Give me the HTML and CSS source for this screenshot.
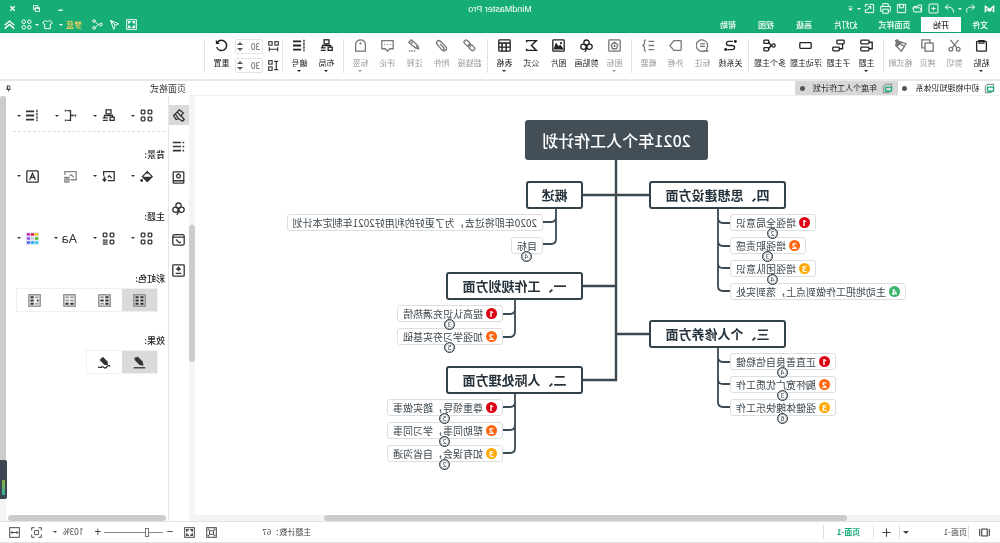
FILE: index.html
```html
<!DOCTYPE html>
<html lang="zh-CN">
<head>
<meta charset="utf-8">
<title>MindMaster Pro</title>
<link rel="stylesheet" href="styles.css">
</head>
<body>
<svg class="sprite" aria-hidden="true">
  <symbol id="logo" viewBox="0 0 16 16"><path d="M1 3l7 5 7-5v11l-4-3-3 2-3-2-4 3z" fill="currentColor" stroke="none"/><path d="M4 7v4M12 7v4" stroke="#17ad77"/></symbol>
  <symbol id="redo" viewBox="0 0 16 16"><path d="M4 14h4a4 4 0 0 0 0-8H2M6 2L2 6l4 4"/></symbol>
  <symbol id="forward" viewBox="0 0 16 16"><path d="M2 14c0-5 3-8 7-8h5M10 2l4 4-4 4"/></symbol>
  <symbol id="back" viewBox="0 0 16 16"><path d="M13 14c2-4 0-8-5-8H2M6 2L2 6l4 4"/></symbol>
  <symbol id="new" viewBox="0 0 16 16"><rect x="1.500" y="1.500" width="13" height="13" rx="1"/><path d="M8 5v6M5 8h6"/></symbol>
  <symbol id="open" viewBox="0 0 16 16"><path d="M2 13V3h5l1 2h5v2M2 13l2-6h11l-2 6z"/></symbol>
  <symbol id="save" viewBox="0 0 16 16"><path d="M2 2h12v12H2zM5 2v5h6V2M9 4v1"/></symbol>
  <symbol id="print" viewBox="0 0 16 16"><path d="M4 5V1h8v4M4 12H1V5h14v7h-3M4 9h8v6H4z"/></symbol>
  <symbol id="export" viewBox="0 0 16 16"><path d="M8 2H2v12h12V9M6 5l7 6M6 9V5h4M10 2h4v4"/></symbol>
  <symbol id="more" viewBox="0 0 16 16"><path d="M3 4h10"/><path d="M3 8h10l-5 5z" fill="currentColor" stroke="none"/></symbol>
  <symbol id="min" viewBox="0 0 16 16"><path d="M3 12h10" stroke-width="3"/></symbol>
  <symbol id="restore" viewBox="0 0 16 16"><path d="M5 5V1h10v9h-4M1 6h10v9H1zM1 8h10" stroke-width="2"/></symbol>
  <symbol id="close" viewBox="0 0 16 16"><path d="M3 3l10 10M13 3L3 13" stroke-width="3"/></symbol>
  <symbol id="full" viewBox="0 0 16 16"><rect x="1" y="1" width="14" height="14"/><path d="M4 7V4h3M9 4h3v3M12 9v3H9M7 12H4V9" stroke-width="2"/></symbol>
  <symbol id="cursor" viewBox="0 0 16 16"><path d="M14 2L2 7l5 2 2 6zM14 2L7 9"/></symbol>
  <symbol id="share" viewBox="0 0 16 16"><circle cx="3" cy="8" r="2"/><circle cx="13" cy="3" r="2"/><circle cx="13" cy="13" r="2"/><path d="M5 8h2l4-4M7 8l4 4"/></symbol>
  <symbol id="shirt" viewBox="0 0 16 16"><path d="M5 2L1 5l2 3 1-1v7h8V7l1 1 2-3-4-3c-1 2-5 2-6 0z"/></symbol>
  <symbol id="apps" viewBox="0 0 16 16"><circle cx="4" cy="4" r="2.600"/><circle cx="12" cy="4" r="2.600"/><circle cx="4" cy="12" r="2.600"/><circle cx="12" cy="12" r="2.600"/></symbol>
  <symbol id="up" viewBox="0 0 16 16"><path d="M1 9l7-6 7 6M1 14l7-6 7 6" stroke-width="2"/></symbol>
  <symbol id="paste" viewBox="0 0 16 16"><rect x="2" y="3" width="12" height="12" rx="1"/><path d="M5 5V2h6v3z"/></symbol>
  <symbol id="cut" viewBox="0 0 16 16"><circle cx="3.500" cy="12.500" r="2.300"/><circle cx="12.500" cy="12.500" r="2.300"/><path d="M5 11l8-10M11 11L3 1"/></symbol>
  <symbol id="copy" viewBox="0 0 16 16"><rect x="1" y="5" width="10" height="10"/><path d="M5 5V1h10v10h-4"/></symbol>
  <symbol id="format" viewBox="0 0 16 16"><path d="M1 6l6-2 6 5-6 6zM4 9l4-3"/><path d="M7 4l3-1 2-2 2 1-1 3 1 3-2 1z" fill="currentColor"/></symbol>
  <symbol id="topic" viewBox="0 0 16 16"><rect x="5" y="1.500" width="10" height="4.500" rx="1"/><rect x="5" y="10" width="10" height="4.500" rx="1"/><path d="M5 4H1v8h4"/></symbol>
  <symbol id="subtopic" viewBox="0 0 16 16"><rect x="1" y="1.500" width="9" height="4.500" rx="1"/><rect x="7" y="10" width="8" height="4.500" rx="1"/><path d="M3 6v6h4"/></symbol>
  <symbol id="float" viewBox="0 0 16 16"><rect x="1" y="4.500" width="14" height="7" rx="1"/></symbol>
  <symbol id="multi" viewBox="0 0 16 16"><circle cx="3" cy="8" r="2"/><rect x="9" y="1.500" width="6" height="4" rx="1"/><rect x="9" y="10.500" width="6" height="4" rx="1"/><path d="M5 8h1l3-4M6 8l3 4"/></symbol>
  <symbol id="relation" viewBox="0 0 16 16"><path d="M5 3h5c4 0 4 5 0 5H6c-4 0-4 5 0 5h6"/><circle cx="2" cy="3" r="1" fill="currentColor"/><circle cx="14" cy="13" r="1" fill="currentColor"/></symbol>
  <symbol id="callout" viewBox="0 0 16 16"><path d="M2 15l1-3a7 7 0 1 1 3 2.500zM5 6h6M5 9h6"/></symbol>
  <symbol id="boundary" viewBox="0 0 16 16"><path d="M2 2h8l5 6-5 6H2q-1 0-1-1V3q0-1 1-1z"/></symbol>
  <symbol id="summary" viewBox="0 0 16 16"><path d="M1 3h7M1 8h7M1 13h7M11 1q2 0 2 2v3l2 2-2 2v3q0 2-2 2"/></symbol>
  <symbol id="badge" viewBox="0 0 16 16"><rect x="1" y="1" width="14" height="14" rx="1"/><path d="M8 4l4 3-1.500 5h-5L4 7z"/><circle cx="8" cy="8.500" r=".6"/></symbol>
  <symbol id="clover" viewBox="0 0 16 16"><circle cx="8" cy="4.500" r="3.300"/><circle cx="4.300" cy="9.500" r="3.300"/><circle cx="11.700" cy="9.500" r="3.300"/><path d="M8 7v5l2 4"/></symbol>
  <symbol id="image" viewBox="0 0 16 16"><rect x="1" y="1" width="14" height="14" rx="1"/><path d="M3 12l3-4 2 2 3-4 2 6z" fill="currentColor"/><circle cx="5" cy="5" r=".6"/></symbol>
  <symbol id="sigma" viewBox="0 0 16 16"><path d="M14 4V2H2l6 6-6 6h12v-2" stroke-width="1.800"/></symbol>
  <symbol id="table" viewBox="0 0 16 16"><rect x="1" y="1" width="14" height="14" rx="1"/><path d="M1 5h14M1 10h14M6 5v10M11 5v10" stroke-width="1.800"/></symbol>
  <symbol id="link" viewBox="0 0 16 16"><rect x="-3.500" y="-2.500" width="8" height="5" rx="2" transform="translate(5 11) rotate(-45)"/><rect x="-4" y="-2.500" width="8" height="5" rx="2" transform="translate(11 5) rotate(-45)"/><path d="M6 10l4-4"/></symbol>
  <symbol id="clip" viewBox="0 0 16 16"><path d="M13 7l-5 6c-4 4-8 0-5-4l6-6c3-3 7 1 4 4l-5 6c-2 2-4 0-3-2l5-5"/></symbol>
  <symbol id="pencil" viewBox="0 0 16 16"><path d="M3 12l1-4 8-7 3 3-8 7zM4 8l3 3M10 3l3 3"/><path d="M7 14.500h8" stroke-dasharray="2 1"/></symbol>
  <symbol id="comment" viewBox="0 0 16 16"><path d="M1 2h14v10h-4l-3 3-3-3H1zM4 7h1M7.500 7h1M11 7h1"/></symbol>
  <symbol id="tag" viewBox="0 0 16 16"><path d="M2 15V6q1-5 6-5t6 5v9z"/><circle cx="8" cy="5.500" r=".6"/></symbol>
  <symbol id="layout" viewBox="0 0 16 16"><rect x="5" y="1" width="6" height="5"/><rect x="1" y="10" width="5" height="4"/><path d="M8 6v3M3 10V8h10v2M9 11h6M9 14h6"/></symbol>
  <symbol id="number" viewBox="0 0 16 16"><path d="M6 3h10M6 8h10M6 13h10" stroke-width="2.200"/><path d="M2.500 1v14" stroke-dasharray="3 1"/></symbol>
  <symbol id="hspace" viewBox="0 0 16 16"><rect x="1" y="1" width="5" height="5"/><rect x="10" y="1" width="5" height="5"/><path d="M2 12h12M2 9v6M14 9v6" stroke-width="1.700"/></symbol>
  <symbol id="vspace" viewBox="0 0 16 16"><rect x="10" y="1" width="5" height="5"/><rect x="10" y="10" width="5" height="5"/><path d="M4 2v12M1 2h6M1 14h6" stroke-width="1.700"/></symbol>
  <symbol id="reset" viewBox="0 0 16 16"><path d="M13 4a6.300 6.300 0 1 0 1 6" stroke-width="1.800"/><path d="M15 1v5h-5z" fill="currentColor" stroke="none"/></symbol>
  <symbol id="doc" viewBox="0 0 16 16"><path d="M2 6V2h9l3 3v9H5" stroke="#8b9a94"/><rect x="2" y="6" width="9" height="6" rx="1" stroke="#17ad77" stroke-width="2"/></symbol>
  <symbol id="pin" viewBox="0 0 16 16"><path d="M5 2h6v8H5zM3 10h10M8 10v5M10 2v8" stroke-width="1.800"/></symbol>
  <symbol id="brush" viewBox="0 0 16 16"><path d="M2 5l5-4 7 7-3 5-3-1-5 3-2-2 4-5zM5 9l5-6M8 12l4-6"/></symbol>
  <symbol id="outline" viewBox="0 0 16 16"><path d="M1 3h2M1 8h2M1 13h2M5 3h10M5 8h10M5 13h10" stroke-width="2"/></symbol>
  <symbol id="starbook" viewBox="0 0 16 16"><rect x="1.500" y="1" width="13" height="14" rx="1"/><path d="M1.500 12h13M8 3.500l2.500 2-1 3h-3l-1-3z"/></symbol>
  <symbol id="calendar" viewBox="0 0 16 16"><rect x="1" y="2" width="14" height="13" rx="2"/><path d="M1 5h14M5 11l2 1 4-4"/></symbol>
  <symbol id="upload" viewBox="0 0 16 16"><rect x="1" y="1" width="14" height="14" rx="1"/><path d="M8 9V5M5.500 7L8 4l2.500 3M4.500 11.500h7" stroke-width="1.700"/></symbol>
  <symbol id="grid4" viewBox="0 0 16 16"><rect x="1.500" y="1.500" width="4.500" height="4.500" rx="1"/><rect x="10" y="1.500" width="4.500" height="4.500" rx="1"/><rect x="1.500" y="10" width="4.500" height="4.500" rx="1"/><rect x="10" y="10" width="4.500" height="4.500" rx="1"/></symbol>
  <symbol id="grid3" viewBox="0 0 16 16"><rect x="1.500" y="1.500" width="4.500" height="4.500" rx="1"/><rect x="10" y="1.500" width="4.500" height="4.500" rx="1"/><rect x="1.500" y="10" width="4.500" height="4.500" rx="1"/><path d="M9 10h6M9 12.500h6M9 15h6"/></symbol>
  <symbol id="bracket" viewBox="0 0 16 16"><path d="M4 8h4M12 2H8v12h4"/><path d="M1 8h2M13 2h2M13 14h2" stroke-width="2.400"/></symbol>
  <symbol id="bucket" viewBox="0 0 16 16"><path d="M7 2l6 6-6 6-6-6zM7 5V1"/><path d="M2 9h10l-5 5z" fill="currentColor"/><circle cx="14" cy="13" r="1" fill="currentColor"/></symbol>
  <symbol id="bgimage" viewBox="0 0 16 16"><path d="M9 13H1V2h13v5M4 10l3-3 2 2"/><path d="M10 11h6l-3 4zM12 8h2v3h-2z" fill="currentColor" stroke="none"/></symbol>
  <symbol id="bgdelete" viewBox="0 0 16 16"><path d="M8 12H1V2h14v4M4 9l3-3 2 1M9 9h7M10 11h5v4h-5zM12.500 11v4"/></symbol>
  <symbol id="watermark" viewBox="0 0 16 16"><rect x="1" y="1" width="14" height="14" rx="1"/><path d="M4.500 12L8 4l3.500 8M6 9h4"/></symbol>
  <symbol id="palette" viewBox="0 0 16 16"><rect width="16" height="16" fill="#e3eaf5" stroke="none"/><g stroke-width="3"><path d="M1 3h4" stroke="#f2b90c"/><path d="M6 3h4" stroke="#e5173f"/><path d="M11 3h4" stroke="#d71bc1"/><path d="M1 8h4" stroke="#54b51c"/><path d="M6 8h4" stroke="#cbcbea"/><path d="M11 8h4" stroke="#8c55eb"/><path d="M1 13h4" stroke="#26cfe7"/><path d="M6 13h4" stroke="#15a7f1"/><path d="M11 13h4" stroke="#595df0"/></g></symbol>
  <symbol id="rainbow" viewBox="0 0 16 16"><rect x="1" y="1" width="14" height="14" stroke="#888" fill="#ddd"/><path d="M3 4h4M9 4h4M3 8h4M9 8h4M3 12h4M9 12h4" stroke-width="2.500"/></symbol>
  <symbol id="rainbow2" viewBox="0 0 16 16"><rect x="1" y="1" width="14" height="14" stroke="#888" fill="#eee"/><path d="M3 4h4M3 8h4M9 8h4M3 12h4" stroke-width="2.500"/><path d="M9 4h4M9 12h4" stroke="#888" stroke-width="2"/></symbol>
  <symbol id="rainbow3" viewBox="0 0 16 16"><rect x="1" y="1" width="14" height="14" stroke="#888" fill="#eee"/><path d="M3 4h4M9 4h4M3 8h4M9 8h4" stroke="#999" stroke-width="2"/><path d="M3 12h4M9 12h4" stroke-width="2.500"/></symbol>
  <symbol id="rainbow4" viewBox="0 0 16 16"><rect x="1" y="1" width="14" height="14" stroke="#888" fill="#eee"/><path d="M9 4h4M3 8h2M9 8h4M9 12h4" stroke-width="2.500"/><path d="M3 4h4M3 12h4" stroke="#999"/></symbol>
  <symbol id="pen" viewBox="0 0 16 16"><path d="M3 2l4-1 6 6 1 5-5-1-6-6z" fill="currentColor" stroke="none" transform="matrix(-1 0 0 1 17 0)"/><path d="M1 14.500h14"/></symbol>
  <symbol id="sketch" viewBox="0 0 16 16"><path d="M4 11V7l6-6 4 4-6 6z" fill="currentColor" stroke="none"/><path d="M1 13q2-3 4 0t4 1 3 0h4"/></symbol>
  <symbol id="slide" viewBox="0 0 16 16"><rect x="4" y="3" width="8" height="10"/><path d="M1 3v10M15 3v10"/></symbol>
  <symbol id="frame" viewBox="0 0 16 16"><rect x="1" y="1" width="14" height="14"/><rect x="5" y="5.500" width="6" height="5"/><path d="M3 5V3h2M11 3h2v2M13 11v2h-2M5 13H3v-2"/></symbol>
  <symbol id="focus" viewBox="0 0 16 16"><path d="M1 5V1h4M11 1h4v4M15 11v4h-4M5 15H1v-4"/><rect x="5" y="5" width="6" height="6" rx="1"/></symbol>
  <symbol id="fitwidth" viewBox="0 0 16 16"><rect x="1" y="1" width="14" height="14"/><path d="M3 8h10M5 6L3 8l2 2M11 6l2 2-2 2"/></symbol>
</svg>

<div class="app">
  <header class="titlebar">
    <div class="title-row">
      <div class="quick">
        <svg class="icon logo"><use href="#logo"/></svg>
        <button aria-label="撤销"><svg class="icon"><use href="#back"/></svg></button>
        <i class="caret"></i>
        <button aria-label="恢复"><svg class="icon"><use href="#forward"/></svg></button>
        <button aria-label="新建"><svg class="icon"><use href="#new"/></svg></button>
        <button aria-label="打开"><svg class="icon"><use href="#open"/></svg></button>
        <button aria-label="保存"><svg class="icon"><use href="#save"/></svg></button>
        <button aria-label="打印"><svg class="icon"><use href="#print"/></svg></button>
        <button aria-label="导出"><svg class="icon"><use href="#export"/></svg></button>
        <i class="caret"></i>
        <button aria-label="更多"><svg class="icon tiny"><use href="#more"/></svg></button>
      </div>
      <h1 class="title">MindMaster Pro</h1>
      <div class="window-buttons">
        <button aria-label="最小化"><svg class="icon tiny"><use href="#min"/></svg></button>
        <button aria-label="还原"><svg class="icon tiny"><use href="#restore"/></svg></button>
        <button aria-label="关闭"><svg class="icon tiny"><use href="#close"/></svg></button>
      </div>
    </div>
    <div class="menu-row">
      <nav class="menu">
        <button>文件</button><button class="active">开始</button><button class="long">页面样式</button><button class="mid">幻灯片</button><button>高级</button><button>视图</button><button>帮助</button>
      </nav>
      <div class="account">
        <button aria-label="全屏"><svg class="icon"><use href="#full"/></svg></button>
        <button aria-label="发送"><svg class="icon"><use href="#cursor"/></svg></button>
        <button aria-label="分享"><svg class="icon"><use href="#share"/></svg></button>
        <button class="user">梦蓝<i class="caret"></i></button>
        <button aria-label="皮肤"><svg class="icon"><use href="#shirt"/></svg></button>
        <i class="caret near"></i>
        <button aria-label="应用"><svg class="icon"><use href="#apps"/></svg></button>
        <button aria-label="收起"><svg class="icon"><use href="#up"/></svg></button>
      </div>
    </div>
  </header>

  <div class="ribbon">
    <div class="group">
      <button class="tool"><svg class="icon"><use href="#paste"/></svg><span>粘贴</span><i class="caret"></i></button>
      <button class="tool off"><svg class="icon"><use href="#cut"/></svg><span>剪切</span></button>
      <button class="tool off"><svg class="icon"><use href="#copy"/></svg><span>拷贝</span></button>
      <button class="tool off"><svg class="icon"><use href="#format"/></svg><span>格式刷</span></button>
    </div>
    <div class="group">
      <button class="tool"><svg class="icon"><use href="#topic"/></svg><span>主题</span><i class="caret"></i></button>
      <button class="tool mid"><svg class="icon"><use href="#subtopic"/></svg><span>子主题</span></button>
      <button class="tool wide"><svg class="icon"><use href="#float"/></svg><span>浮动主题</span></button>
      <button class="tool wide"><svg class="icon"><use href="#multi"/></svg><span>多个主题</span></button>
    </div>
    <div class="group">
      <button class="tool mid"><svg class="icon"><use href="#relation"/></svg><span>关系线</span></button>
      <button class="tool off"><svg class="icon"><use href="#callout"/></svg><span>标注</span></button>
      <button class="tool off"><svg class="icon"><use href="#boundary"/></svg><span>外框</span></button>
      <button class="tool off"><svg class="icon"><use href="#summary"/></svg><span>概要</span></button>
    </div>
    <div class="group">
      <button class="tool off"><svg class="icon"><use href="#badge"/></svg><span>图标</span><i class="caret"></i></button>
      <button class="tool mid"><svg class="icon"><use href="#clover"/></svg><span>剪贴画</span></button>
      <button class="tool"><svg class="icon"><use href="#image"/></svg><span>图片</span></button>
      <button class="tool"><svg class="icon"><use href="#sigma"/></svg><span>公式</span></button>
      <button class="tool"><svg class="icon"><use href="#table"/></svg><span>表格</span><i class="caret"></i></button>
    </div>
    <div class="group">
      <button class="tool off mid"><svg class="icon"><use href="#link"/></svg><span>超链接</span></button>
      <button class="tool off"><svg class="icon"><use href="#clip"/></svg><span>附件</span></button>
      <button class="tool off"><svg class="icon"><use href="#pencil"/></svg><span>注释</span></button>
      <button class="tool off"><svg class="icon"><use href="#comment"/></svg><span>评论</span></button>
      <button class="tool off"><svg class="icon"><use href="#tag"/></svg><span>标签</span><i class="caret"></i></button>
    </div>
    <div class="group">
      <button class="tool"><svg class="icon"><use href="#layout"/></svg><span>布局</span><i class="caret"></i></button>
      <button class="tool"><svg class="icon"><use href="#number"/></svg><span>编号</span><i class="caret"></i></button>
    </div>
    <div class="group">
      <div class="spacing">
        <label><svg class="icon small"><use href="#hspace"/></svg><span class="spin"><input type="text" value="30" aria-label="水平间距"><span class="arrows"><i class="arrow-up"></i><i class="caret big"></i></span></span></label>
        <label><svg class="icon small"><use href="#vspace"/></svg><span class="spin"><input type="text" value="30" aria-label="垂直间距"><span class="arrows"><i class="arrow-up"></i><i class="caret big"></i></span></span></label>
      </div>
      <button class="tool"><svg class="icon"><use href="#reset"/></svg><span>重置</span></button>
    </div>
  </div>

  <main class="main">
    <section class="workspace">
      <div class="doc-tabs">
        <button class="doc-tab"><svg class="icon small"><use href="#doc"/></svg>初中物理知识体系<i class="dot"></i></button>
        <button class="doc-tab current"><svg class="icon small"><use href="#doc"/></svg>年度个人工作计划<i class="dot"></i></button>
      </div>
      <div class="work-body">
        <div class="canvas-col">
          <div class="canvas">
            <svg class="wires" width="805" height="420">
              <path d="M384 64v221M350 99h67M350 238h34M384 190h33M383 284h34"/>
              <path class="thin" d="M282 112v78q0 5-5 5h-7M282 122q0 5-5 5h-7M282 145q0 5-5 5h-7M282 168q0 4-5 4h-7"/>
              <path class="thin" d="M282 252v54q0 5-5 5h-7M282 261q0 5-5 5h-7M282 284q0 4-5 4h-7"/>
              <path class="thin" d="M444 112v31q0 5 5 5h8M444 121q0 5 5 5h8"/>
              <path class="thin" d="M485 204v31q0 6 5 6h7M485 213q0 5 5 5h7"/>
              <path class="thin" d="M485 298v54q0 5 5 5h7M485 306q0 5 5 5h7M485 329q0 5 5 5h7"/>
            </svg>
            <div class="root">2021年个人工作计划</div>
            <div class="branch b4">四、思想建设方面</div>
            <div class="branch b3">三、个人修养方面</div>
            <div class="branch b0">概述</div>
            <div class="branch b1">一、工作规划方面</div>
            <div class="branch b2">二、人际处理方面</div>
            <div class="leaves to-left l4">
              <div class="leaf"><b class="mark m1">1</b>增强全局意识<span class="count">2</span></div>
              <div class="leaf"><b class="mark m2">2</b>增强职责感<span class="count">3</span></div>
              <div class="leaf"><b class="mark m3">3</b>增强团队意识<span class="count">4</span></div>
              <div class="leaf"><b class="mark m4">4</b>主动地把工作做到点上，落到实处</div>
            </div>
            <div class="leaves to-left l3">
              <div class="leaf"><b class="mark m1">1</b>正直善良自信稳健<span class="count">4</span></div>
              <div class="leaf"><b class="mark m2">2</b>胸怀宽广优质工作<span class="count">3</span></div>
              <div class="leaf"><b class="mark m3">3</b>强健体魄快乐工作<span class="count">6</span></div>
            </div>
            <div class="leaves l0">
              <div class="leaf">2020年即将过去，为了更好的利用好2021年制定本计划</div>
              <div class="leaf">目标<span class="count">4</span></div>
            </div>
            <div class="leaves l1">
              <div class="leaf"><b class="mark m1">1</b>提高认识充满热情<span class="count">3</span></div>
              <div class="leaf"><b class="mark m2">2</b>加强学习夯实基础<span class="count">5</span></div>
            </div>
            <div class="leaves l2">
              <div class="leaf"><b class="mark m1">1</b>尊重领导，踏实做事<span class="count">5</span></div>
              <div class="leaf"><b class="mark m2">2</b>帮助同事，学习同事<span class="count">2</span></div>
              <div class="leaf"><b class="mark m3">3</b>如有误会，自省沟通<span class="count">2</span></div>
            </div>
          </div>
          <div class="scroll-x"><i></i></div>
        </div>
        <div class="scroll-y"><i></i></div>
      </div>
    </section>

    <aside class="side">
      <div class="side-head"><h2>页面格式</h2><button aria-label="固定"><svg class="icon tiny"><use href="#pin"/></svg></button></div>
      <div class="side-body">
        <div class="strip">
          <button class="on" aria-label="格式"><svg class="icon"><use href="#brush"/></svg></button>
          <button aria-label="大纲"><svg class="icon"><use href="#outline"/></svg></button>
          <button aria-label="图标"><svg class="icon"><use href="#starbook"/></svg></button>
          <button aria-label="剪贴画"><svg class="icon"><use href="#clover"/></svg></button>
          <button aria-label="任务"><svg class="icon"><use href="#calendar"/></svg></button>
          <button aria-label="导出"><svg class="icon"><use href="#upload"/></svg></button>
        </div>
        <div class="panel">
          <div class="panel-content">
            <div class="options first">
              <button aria-label="结构"><svg class="icon"><use href="#grid4"/></svg><i class="caret"></i></button>
              <button aria-label="布局"><svg class="icon"><use href="#layout"/></svg><i class="caret"></i></button>
              <button aria-label="连接线"><svg class="icon"><use href="#bracket"/></svg><i class="caret"></i></button>
              <button aria-label="编号"><svg class="icon"><use href="#number"/></svg><i class="caret"></i></button>
            </div>
            <h3 class="top">背景:</h3>
            <div class="options">
              <button aria-label="填充"><svg class="icon"><use href="#bucket"/></svg><i class="caret"></i></button>
              <button aria-label="背景图片"><svg class="icon"><use href="#bgimage"/></svg><i class="caret"></i></button>
              <button class="dim" aria-label="删除背景"><svg class="icon"><use href="#bgdelete"/></svg></button>
              <button aria-label="水印"><svg class="icon"><use href="#watermark"/></svg><i class="caret"></i></button>
            </div>
            <h3>主题:</h3>
            <div class="options">
              <button aria-label="主题"><svg class="icon"><use href="#grid4"/></svg><i class="caret"></i></button>
              <button aria-label="主题样式"><svg class="icon"><use href="#grid3"/></svg><i class="caret"></i></button>
              <button class="font">Aa<i class="caret"></i></button>
              <button aria-label="颜色"><svg class="icon"><use href="#palette"/></svg><i class="caret"></i></button>
            </div>
            <h3>彩虹色:</h3>
            <div class="choices">
              <button class="on" aria-label="彩虹一"><svg class="icon"><use href="#rainbow"/></svg></button>
              <button aria-label="彩虹二"><svg class="icon"><use href="#rainbow2"/></svg></button>
              <button aria-label="彩虹三"><svg class="icon"><use href="#rainbow3"/></svg></button>
              <button aria-label="彩虹四"><svg class="icon"><use href="#rainbow4"/></svg></button>
            </div>
            <h3>效果:</h3>
            <div class="choices">
              <button class="on" aria-label="普通"><svg class="icon"><use href="#pen"/></svg></button>
              <button aria-label="手绘"><svg class="icon"><use href="#sketch"/></svg></button>
            </div>
          </div>
          <div class="panel-scroll-x"></div>
        </div>
        <div class="side-scroll"><i></i></div>
        <div class="meter"><i></i></div>
      </div>
    </aside>
  </main>

  <footer class="status">
    <div class="pages">
      <button class="cell slide" aria-label="幻灯片"><svg class="icon small"><use href="#slide"/></svg></button>
      <button class="cell page-pick">页面-1<i class="caret big"></i></button>
      <button class="cell add" aria-label="添加页面"><svg class="icon small" viewBox="0 0 16 16"><path d="M8 2v12M2 8h12"/></svg></button>
      <button class="cell page">页面-1</button>
    </div>
    <div class="zoom">
      <span class="total">主题计数：67</span>
      <button aria-label="适合窗口"><svg class="icon small"><use href="#frame"/></svg></button>
      <button aria-label="全屏"><svg class="icon small"><use href="#full"/></svg></button>
      <span class="slider"><button aria-label="缩小">−</button><input type="range" min="0" max="100" value="27" aria-label="缩放"><button aria-label="放大">+</button></span>
      <button class="percent">103%<i class="caret"></i></button>
      <button aria-label="聚焦"><svg class="icon small"><use href="#focus"/></svg></button>
      <button aria-label="适合宽度"><svg class="icon small"><use href="#fitwidth"/></svg></button>
    </div>
  </footer>
</div>
</body>
</html>
```

FILE: styles.css
```css
* { box-sizing: border-box; }

body {
  margin: 0;
  background: #fff;
  color: #333;
  font: 8px/12px "Noto Sans CJK SC", "Noto Sans", sans-serif;
  overflow: hidden;
}

h1, h2, h3 { margin: 0; font: inherit; }

button {
  display: flex;
  align-items: center;
  justify-content: center;
  padding: 0;
  border: 0;
  background: none;
  color: inherit;
  font: inherit;
  white-space: nowrap;
}

.sprite { position: absolute; width: 0; height: 0; }

.icon {
  flex: none;
  width: 13px;
  height: 13px;
  fill: none;
  stroke: currentColor;
  stroke-width: 1.6;
}
.icon.small { width: 11px; height: 11px; }
.icon.tiny { width: 7px; height: 7px; }

.caret {
  flex: none;
  border: 2px solid transparent;
  border-top-color: currentColor;
  border-bottom: 0;
}
.caret.big { border-width: 3px 3px 0; }
.arrow-up {
  border: 3px solid transparent;
  border-bottom-color: currentColor;
  border-top: 0;
}

/* The whole window is shown as seen in a mirror. */
.app {
  display: flex;
  flex-direction: column;
  height: 100vh;
  transform: scaleX(-1);
}

/* Title bar */
.titlebar {
  flex: none;
  background: #17ad77;
  border-bottom: 1px solid #0f9f69;
  color: #fff;
}
.titlebar .icon { width: 11px; height: 11px; stroke-width: 1.4; }
.titlebar .icon.tiny { width: 7px; height: 7px; }
.title-row {
  display: grid;
  grid-template-columns: 1fr auto 1fr;
  align-items: center;
  height: 17px;
}
.quick { display: flex; align-items: center; gap: 5px; padding-left: 5px; }
.quick .titlebar .logo { width: 13px; height: 13px; }
.quick .caret { margin: 0 -2px; }
.quick .logo { margin-right: 3px; }
.title { font: 9px/16px "Liberation Sans", sans-serif; }
.window-buttons {
  display: flex;
  justify-content: flex-end;
  gap: 17px;
  padding-right: 9px;
}
.menu-row { display: flex; justify-content: space-between; height: 15px; }
.menu { display: flex; padding-left: 1px; font-weight: 500; }
.menu button { width: 38px; padding-top: 1px; }
.menu .active { width: 40px; background: #fff; color: #333; }
.menu .long { width: 53px; }
.menu .mid { width: 45px; }
.account { display: flex; align-items: center; gap: 6px; padding-right: 4px; }
.account .user { margin-left: 4px; color: #ffd45c; font-weight: 500; gap: 3px; }
.account .near { margin: 0 -3px; }
.user .caret { color: #fff; }

/* Ribbon */
.ribbon {
  display: flex;
  flex: none;
  height: 48px;
  padding: 6px 0 6px 5px;
  border-bottom: 2px solid #e8e8e8;
}
.group {
  display: flex;
  padding-right: 3px;
  margin-right: 3px;
  border-right: 1px solid #e2e2e2;
}
.tool {
  flex-direction: column;
  justify-content: flex-start;
  width: 27px;
  color: #222;
}
.tool .icon { margin-bottom: 5px; }
.tool.mid { width: 29px; }
.tool.wide { width: 36px; }
.tool.off { color: #999; }
.tool.off .icon { color: #777; }
.tool .caret { margin-top: 1px; }
.spacing { display: grid; gap: 4px; align-content: start; }
.spacing label { display: flex; align-items: center; gap: 5px; color: #333; }
.spin {
  display: flex;
  align-items: center;
  width: 28px;
  height: 15px;
  border: 1px solid #e4e4e4;
  border-radius: 2px;
}
.spin input {
  flex: 1;
  min-width: 0;
  width: 0;
  padding: 0 0 0 2px;
  border: 0;
  background: none;
  color: #555;
  font: 8px/12px "Noto Sans", sans-serif;
}
.arrows { display: grid; gap: 3px; padding-right: 1px; color: #555; }

/* Work area */
.main { display: flex; flex: 1; min-height: 0; }
.workspace { display: flex; flex: 1; flex-direction: column; min-width: 0; }
.doc-tabs { display: flex; flex: none; height: 15px; border-bottom: 1px solid #f0f0f0; }
.doc-tab { width: 102px; gap: 5px; color: #222; }
.doc-tab.current { width: 103px; background: #d8d8d8; }
.dot { width: 5px; height: 5px; margin-left: 3px; border-radius: 50%; background: #555; }
.work-body { display: flex; flex: 1; min-height: 0; }
.canvas-col { display: flex; flex: 1; flex-direction: column; min-width: 0; }
.canvas { position: relative; flex: 1; overflow: hidden; }
.scroll-x { flex: none; height: 6px; background: #f4f4f4; }
.scroll-x i {
  display: block;
  width: 65%;
  height: 6px;
  margin-left: 19%;
  border-radius: 3px;
  background: #ccc;
}
.scroll-y { display: flex; flex: none; flex-direction: column; width: 6px; background: #f4f4f4; }
.scroll-y::before { content: ""; flex: 129; }
.scroll-y i { flex: 137; border-radius: 3px; background: #ccc; }
.scroll-y::after { content: ""; flex: 159; }

/* Mind map */
.wires { position: absolute; left: 0; top: 0; fill: none; stroke: #3b4953; stroke-width: 2.4; }
.wires .thin { stroke-width: 1.8; }
.root, .branch, .leaves { position: absolute; white-space: nowrap; }
.root {
  left: 292px;
  top: 24px;
  width: 183px;
  border-radius: 3px;
  background: #434e57;
  color: #fff;
  font-size: 16px;
  font-weight: 500;
  line-height: 40px;
  text-align: center;
}
.branch {
  width: 137px;
  border: 2px solid #33414b;
  border-radius: 3px;
  background: #fff;
  color: #27333c;
  font-size: 13px;
  font-weight: 700;
  line-height: 24px;
  text-align: center;
}
.b4 { left: 214px; top: 85px; }
.b3 { left: 214px; top: 224px; }
.b0 { left: 417px; top: 85px; width: 57px; }
.b1 { left: 417px; top: 176px; }
.b2 { left: 417px; top: 270px; }

.leaves { display: flex; flex-direction: column; align-items: flex-start; gap: 6px; }
.to-left { left: 0; width: 270px; align-items: flex-end; }
.l4 { top: 118px; }
.l3 { top: 257px; }
.l0 { left: 457px; top: 118px; }
.l1 { left: 497px; top: 209px; }
.l2 { left: 497px; top: 303px; }
.leaf {
  position: relative;
  display: flex;
  align-items: center;
  gap: 3px;
  height: 17px;
  padding: 0 5px;
  border: 1px solid #dedede;
  border-radius: 3px;
  color: #3c474f;
  font-size: 10px;
  line-height: 15px;
}
.mark {
  width: 11px;
  height: 11px;
  border-radius: 50%;
  color: #fff;
  font: bold 9px/11px "Noto Sans", sans-serif;
  text-align: center;
}
.m1 { background: #dc0012; }
.m2 { background: #ff6510; }
.m3 { background: #ffa800; }
.m4 { background: #3cb46e; }
.count {
  position: absolute;
  z-index: 1;
  left: calc(50% - 5px);
  bottom: -9px;
  width: 11px;
  height: 11px;
  border: 1px solid #27333c;
  border-radius: 50%;
  background: #fff;
  box-shadow: inset 0 0 0 1px #a9b0b5;
  font: 7px/9px "Noto Sans", sans-serif;
  text-align: center;
}

/* Side panel */
.side { display: flex; flex: none; flex-direction: column; width: 189px; }
.side-head {
  display: flex;
  flex: none;
  align-items: center;
  justify-content: space-between;
  height: 15px;
  padding: 0 5px 0 3px;
  font-size: 9px;
}
.side-body { position: relative; display: flex; flex: 1; min-height: 0; }
.strip {
  display: flex;
  flex-direction: column;
  flex: none;
  gap: 11px;
  width: 21px;
  padding-top: 9px;
  border-right: 1px solid #e8e8e8;
  color: #333;
}
.strip button { height: 20px; }
.strip .on, .choices .on { background: #dadada; }
.panel { display: flex; flex: 1; flex-direction: column; min-width: 0; }
.panel-content { flex: 1; padding: 8px 7px 0 3px; color: #333; }
.options { display: grid; grid-template-columns: repeat(4, 38px); height: 24px; padding-left: 12px; }
.options button { justify-content: flex-start; gap: 5px; }
.options.first { height: 28px; padding-bottom: 4px; border-bottom: 1px dashed #ddd; }
.options .dim { color: #888; }
.options .font { gap: 3px; font: 13px/16px "Noto Sans", sans-serif; }
.panel h3 { padding: 22px 0 2px; font-size: 9px; font-weight: 500; line-height: 14px; color: #222; }
.panel h3.top { padding-top: 16px; }
.choices { display: flex; width: max-content; height: 24px; margin-left: 7px; border: 1px solid #f0f0f0; }
.choices button { width: 35px; }
.panel-scroll-x { flex: none; height: 6px; margin: 0 2px; border-radius: 3px; background: #ccc; }
.side-scroll { flex: none; width: 6px; background: #f4f4f4; }
.side-scroll i { display: block; height: 87%; border-radius: 3px; background: #ccc; }
.meter {
  position: absolute;
  right: 0;
  bottom: 22px;
  display: flex;
  align-items: flex-end;
  width: 7px;
  height: 39px;
  padding: 4px 1px 4px 2px;
  border-radius: 2px 0 0 2px;
  background: #3d4452;
}
.meter i { width: 3px; height: 15px; background: linear-gradient(#8fae3a, #2bb5a0); }

/* Status bar */
.status {
  display: flex;
  flex: none;
  justify-content: space-between;
  height: 22px;
  border-top: 1px solid #e2e2e2;
  border-bottom: 1px solid #e2e2e2;
  color: #444;
}
.pages, .zoom { display: flex; align-items: center; }
.cell { height: 14px; border-right: 1px solid #ddd; }
.slide { width: 32px; }
.page-pick { width: 69px; justify-content: space-between; padding: 0 3px 0 1px; }
.add { width: 26px; }
.page { width: 50px; color: #17ad77; font-weight: 700; }
.zoom { gap: 11px; padding-right: 9px; }
.zoom .icon { stroke-width: 1.4; }
.total { margin-right: 34px; }
.slider { display: flex; align-items: center; gap: 3px; }
.slider button { width: 7px; font: 12px/12px "Noto Sans", sans-serif; }
.slider input {
  width: 59px;
  height: 10px;
  margin: 0;
  background: linear-gradient(#888, #888) center / 100% 1px no-repeat;
  appearance: none;
}
.slider input::-webkit-slider-thumb {
  width: 4px;
  height: 9px;
  border: 1px solid #777;
  background: #fff;
  appearance: none;
}
.percent { gap: 6px; font: 8px/12px "Noto Sans", sans-serif; }
```
